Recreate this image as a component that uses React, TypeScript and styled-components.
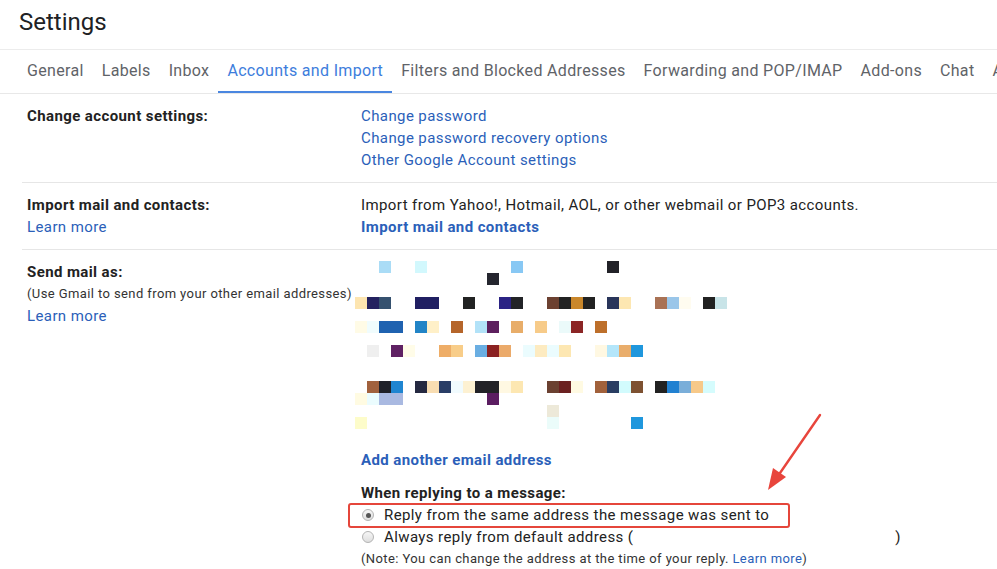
import React from 'react'
import styled, { createGlobalStyle } from 'styled-components'

const GlobalStyle = createGlobalStyle`
    html, body {
        margin: 0;
        padding: 0;
        background: #fff;
        overflow: hidden;
    }
    body {
        font-family: Roboto, "Liberation Sans", Arial, sans-serif;
        color: #222;
    }
`

const Page = styled.div`
    position: relative;
    width: 997px;
    height: 569px;
    overflow: hidden;
`

const Header = styled.div`
    height: 49px;
    border-bottom: 1px solid #ececec;
`

const Title = styled.h1`
    margin: 0;
    padding-left: 19px;
    font-size: 24px;
    font-weight: 400;
    line-height: 44px;
    color: #202124;
`

const TabBar = styled.div`
    display: flex;
    height: 44px;
    box-sizing: border-box;
    padding-left: 18px;
    border-bottom: 1px solid #e8e8e8;
    white-space: nowrap;
    overflow: hidden;
`

const Tab = styled.div<{ $active?: boolean }>`
    flex-shrink: 0;
    height: 44px;
    box-sizing: border-box;
    padding: 1px 9px 0;
    margin-bottom: -1px;
    font-size: 16px;
    line-height: 40px;
    letter-spacing: 0.33px;
    color: ${p => (p.$active ? '#3d7ddc' : '#5f6368')};
    border-bottom: 3px solid ${p => (p.$active ? '#4a86e0' : 'transparent')};
`

const Section = styled.div<{ $last?: boolean }>`
    display: grid;
    grid-template-columns: 334px 1fr;
    margin-left: 22px;
    padding: 11px 0 11px 5px;
    border-bottom: ${p => (p.$last ? 'none' : '1px solid #e6e6e6')};
    font-size: 15px;
    line-height: 22px;
    letter-spacing: 0.4px;
`

const LabelCol = styled.div`
    display: flex;
    flex-direction: column;
`

const Label = styled.div`
    font-weight: 700;
    color: #222;
`

const SubNote = styled.div`
    font-size: 13px;
    color: #333;
`

const ValueCol = styled.div`
    display: flex;
    flex-direction: column;
    align-items: flex-start;
`

const Link = styled.a<{ $bold?: boolean }>`
    color: #2b5fb9;
    font-weight: ${p => (p.$bold ? 700 : 400)};
    text-decoration: none;
    cursor: pointer;
`

const Plain = styled.div`
    color: #222;
`

const PixelArt = styled.svg`
    display: block;
    margin-left: -6px;
`

const AddAddress = styled.div`
    margin-top: 20px;
`

const ReplyBlock = styled.div`
    margin-top: 11px;
    display: flex;
    flex-direction: column;
`

const RadioRow = styled.label`
    position: relative;
    display: flex;
    align-items: center;
    gap: 10px;
    color: #222;
`

const Radio = styled.span<{ $checked?: boolean }>`
    position: relative;
    flex-shrink: 0;
    width: 12px;
    height: 12px;
    margin-left: 1px;
    box-sizing: border-box;
    border-radius: 50%;
    border: 1px solid #b3b3b3;
    background: linear-gradient(#f6f6f6, #dedede);

    &::after {
        content: '';
        display: ${p => (p.$checked ? 'block' : 'none')};
        position: absolute;
        left: 2.5px;
        top: 2.5px;
        width: 5px;
        height: 5px;
        border-radius: 50%;
        background: #555;
    }
`

const Highlight = styled.span`
    position: absolute;
    left: -13px;
    top: -1px;
    width: 442px;
    height: 25px;
    box-sizing: border-box;
    border: 2px solid #e5463b;
    border-radius: 3px;
    pointer-events: none;
`

const Redacted = styled.span`
    display: inline-block;
    width: 262px;
`

const Note = styled.div`
    font-size: 13px;
    color: #333;
`

const Arrow = styled.svg`
    position: absolute;
    left: 0;
    top: 0;
    pointer-events: none;
`

const TABS = [
    'General',
    'Labels',
    'Inbox',
    'Accounts and Import',
    'Filters and Blocked Addresses',
    'Forwarding and POP/IMAP',
    'Add-ons',
    'Chat',
    'Advanced',
]

// row, column, colour (12px cells of the blurred address list)
const PIXELS: [number, number, string][] = [
    [0, 2, '#aadcf6'], [0, 5, '#d2f8fd'], [0, 13, '#88c8f4'], [0, 21, '#222228'],
    [1, 11, '#25262f'],
    [3, 0, '#fde5b0'], [3, 1, '#242260'], [3, 2, '#35516f'], [3, 5, '#201f62'], [3, 6, '#201f62'],
    [3, 9, '#222323'], [3, 12, '#2b2384'], [3, 13, '#222327'], [3, 16, '#6c4131'], [3, 17, '#222222'],
    [3, 18, '#c9872b'], [3, 19, '#222222'], [3, 21, '#29355a'], [3, 22, '#fde7b2'], [3, 25, '#a97255'],
    [3, 26, '#9ac6e9'], [3, 27, '#fffcf0'], [3, 29, '#222222'], [3, 30, '#c8e4e8'],
    [5, 0, '#fffbe6'], [5, 1, '#f0fcfd'], [5, 2, '#1f62b0'], [5, 3, '#1f62b0'], [5, 5, '#2284c6'],
    [5, 6, '#fff0c8'], [5, 8, '#b5652a'], [5, 10, '#b2e2f8'], [5, 11, '#5d1f5e'], [5, 13, '#e8ad69'],
    [5, 15, '#f7cb89'], [5, 17, '#ebfafa'], [5, 18, '#8b2525'], [5, 20, '#bd6f2b'],
    [7, 1, '#efefef'], [7, 3, '#5f2163'], [7, 4, '#fffce8'], [7, 7, '#eead67'], [7, 8, '#f8cd89'],
    [7, 10, '#6aaee2'], [7, 11, '#8b2121'], [7, 12, '#ebaa6a'], [7, 14, '#ebfcfe'], [7, 15, '#fdebc1'],
    [7, 16, '#ebfcfe'], [7, 17, '#fde7b2'], [7, 20, '#fff8e2'], [7, 21, '#b4e6fa'], [7, 22, '#e9ad6b'],
    [7, 23, '#1f97dd'],
    [10, 1, '#a1613d'], [10, 2, '#1f2129'], [10, 3, '#1f85d1'], [10, 5, '#252941'], [10, 6, '#f8ddb2'],
    [10, 7, '#293d66'], [10, 8, '#f1fbfe'], [10, 9, '#fdf1d2'], [10, 10, '#222227'], [10, 11, '#222227'],
    [10, 12, '#fff8e2'], [10, 13, '#fde7b2'], [10, 16, '#6b4131'], [10, 17, '#6b2121'], [10, 18, '#fffae2'],
    [10, 20, '#a1613b'], [10, 21, '#293d62'], [10, 22, '#d2fbfd'], [10, 23, '#7d5131'], [10, 25, '#222222'],
    [10, 26, '#2181d1'], [10, 27, '#7aaed9'], [10, 28, '#f7c989'], [10, 29, '#d5fcfd'],
    [11, 0, '#fffbe2'], [11, 1, '#ebfcfe'], [11, 2, '#a9b9e1'], [11, 3, '#a9b9e1'], [11, 11, '#5b1d61'],
    [12, 16, '#ede9d9'],
    [13, 0, '#fdfcca'], [13, 16, '#ebfcfa'], [13, 23, '#1f97dd'],
]

const CELL = 12

const App: React.FC = () => {
    return (
        <>
            <GlobalStyle />
            <Page>
                <Header>
                    <Title>Settings</Title>
                </Header>
                <TabBar>
                    {TABS.map(t => (
                        <Tab key={t} $active={t === 'Accounts and Import'}>{t}</Tab>
                    ))}
                </TabBar>

                <Section>
                    <LabelCol>
                        <Label>Change account settings:</Label>
                    </LabelCol>
                    <ValueCol>
                        <Link>Change password</Link>
                        <Link>Change password recovery options</Link>
                        <Link>Other Google Account settings</Link>
                    </ValueCol>
                </Section>

                <Section>
                    <LabelCol>
                        <Label>Import mail and contacts:</Label>
                        <Link>Learn more</Link>
                    </LabelCol>
                    <ValueCol>
                        <Plain>Import from Yahoo!, Hotmail, AOL, or other webmail or POP3 accounts.</Plain>
                        <Link $bold>Import mail and contacts</Link>
                    </ValueCol>
                </Section>

                <Section $last>
                    <LabelCol>
                        <Label>Send mail as:</Label>
                        <SubNote>(Use Gmail to send from your other email addresses)</SubNote>
                        <Link>Learn more</Link>
                    </LabelCol>
                    <ValueCol>
                        <PixelArt width={31 * CELL} height={14 * CELL} viewBox={`0 0 ${31 * CELL} ${14 * CELL}`}>
                            {PIXELS.map(([r, c, fill], i) => (
                                <rect key={i} x={c * CELL} y={r * CELL} width={CELL} height={CELL} fill={fill} />
                            ))}
                        </PixelArt>
                        <AddAddress>
                            <Link $bold>Add another email address</Link>
                        </AddAddress>
                        <ReplyBlock>
                            <Label>When replying to a message:</Label>
                            <RadioRow>
                                <Radio $checked />
                                Reply from the same address the message was sent to
                                <Highlight />
                            </RadioRow>
                            <RadioRow>
                                <Radio />
                                <span>Always reply from default address (<Redacted />)</span>
                            </RadioRow>
                            <Note>
                                (Note: You can change the address at the time of your reply. <Link>Learn more</Link>)
                            </Note>
                        </ReplyBlock>
                    </ValueCol>
                </Section>

                <Arrow width={997} height={569}>
                    <line x1={820} y1={415} x2={780} y2={473} stroke="#e8453c" strokeWidth={2.4} strokeLinecap="round" />
                    <polygon points="768,490 786,477 773,468" fill="#e8453c" />
                </Arrow>
            </Page>
        </>
    )
}

export default App
